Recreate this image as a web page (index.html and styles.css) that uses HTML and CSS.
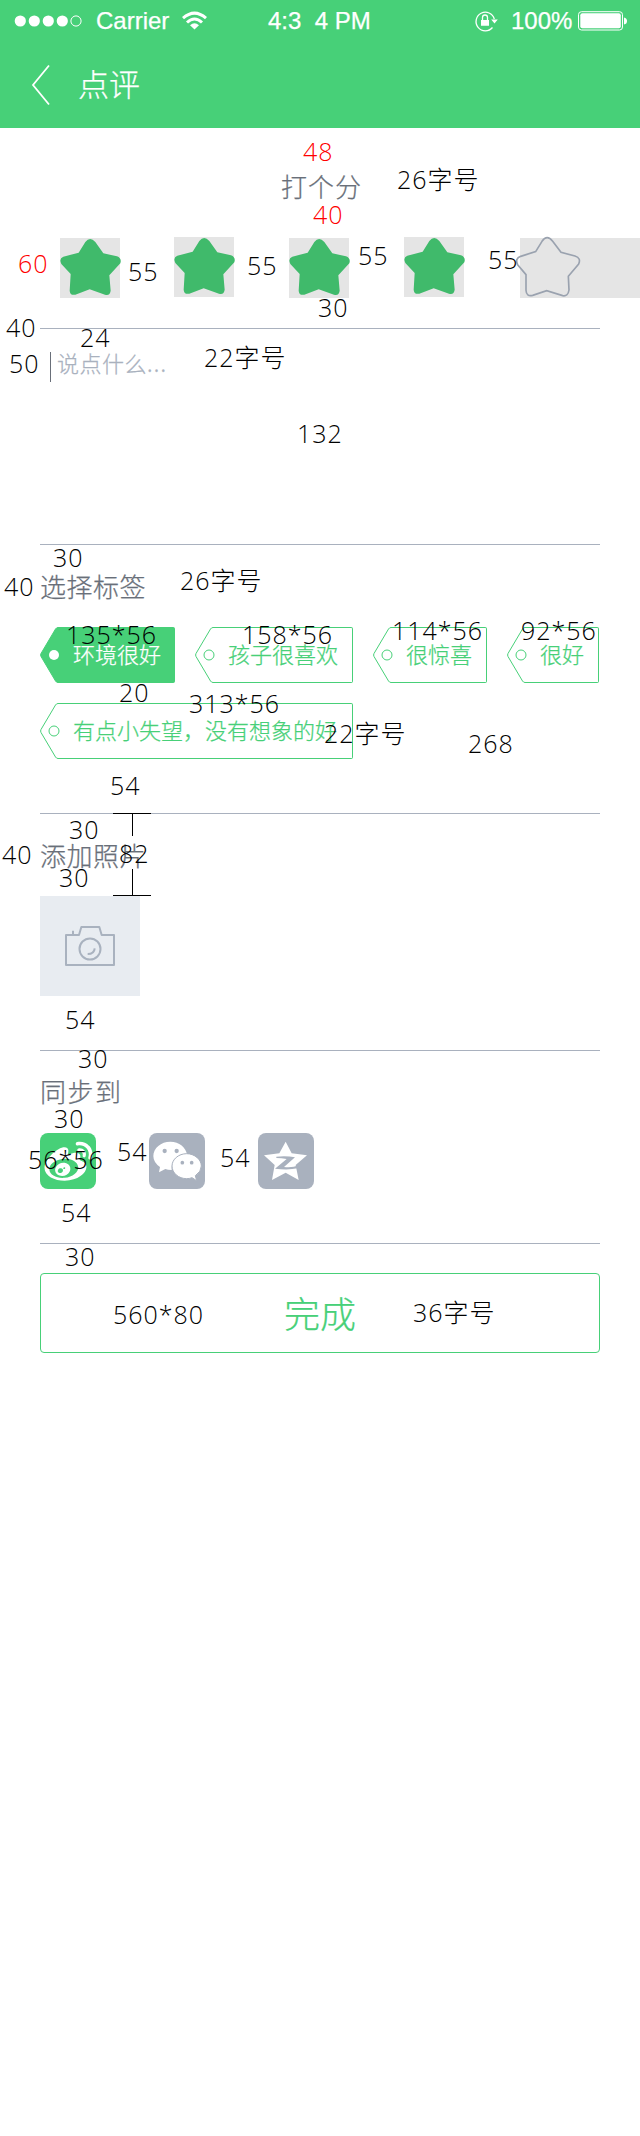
FILE: index.html
```html
<!DOCTYPE html>
<html lang="zh-CN">
<head>
<meta charset="utf-8">
<title>点评</title>
<link rel="stylesheet" href="styles.css">
</head>
<body>
<svg class="defs" width="0" height="0">
  <defs>
    <path id="star" d="M76 12Q90-6 106 12L130 46L171 55Q186 61 181 76L148 112L152 158Q150 174 135 170L89 154L46 170Q30 173 29 158L32 108L4 78Q-4 62 10 56L56 44Z"/>
    <path id="tag-head" d="M18 .5Q16.500 .5 15.500 2L1 26.500Q.2 28 1 29.500L15.500 54Q16.500 55.500 18 55.500"/>
  </defs>
</svg>
<header class="header">
  <div class="status">
    <svg class="signal" width="68" height="14" viewBox="0 0 68 14"><g fill="#fff"><circle cx="6.300" cy="7" r="5.600"/><circle cx="20.300" cy="7" r="5.600"/><circle cx="34.300" cy="7" r="5.600"/><circle cx="48.300" cy="7" r="5.600"/></g><circle cx="62" cy="7" r="5.100" fill="none" stroke="#fff"/></svg>
    <span class="carrier">Carrier</span>
    <svg class="wifi" width="25" height="19" viewBox="0 0 25 19"><g fill="none" stroke="#fff" stroke-width="3"><path d="M1 7.200Q12.500-3 24 7.200"/><path d="M5 11.500Q12.500 4.500 20 11.500"/></g><path fill="#fff" d="M8 14.200Q12.500 10.500 17 14.200L12.500 18.500Z"/></svg>
    <span class="time">4:3  4 PM</span>
    <svg class="lock" width="24" height="22" viewBox="0 0 24 22"><path fill="none" stroke="#fff" stroke-width="1.300" d="M17.500 17.500A9.300 9.300 0 1 1 19.300 9"/><path fill="#fff" d="M16.200 9.500H22.800L19.500 13.500ZM6 10H14V15.800H6Z"/><path fill="none" stroke="#fff" stroke-width="1.300" d="M7.500 10V7.500Q7.500 5 10 5Q12.500 5 12.500 7.500V10"/></svg>
    <span class="percent">100%</span>
    <svg class="battery" width="50" height="20" viewBox="0 0 50 20"><rect x=".5" y=".7" width="44" height="18.300" rx="3" fill="none" stroke="#fff"/><rect x="2.300" y="2.300" width="40.500" height="15" rx="2" fill="#fff"/><path fill="#fff" d="M46 6.500Q49 7 49 10Q49 13 46 13.500Z"/></svg>
  </div>
  <div class="nav">
    <svg width="20" height="42" viewBox="0 0 20 42"><path fill="none" stroke="#fff" stroke-width="1.800" d="M18 1.500L2 21L18 40.500"/></svg>
    <h1>点评</h1>
  </div>
</header>

<main class="page">
  <section class="score">
    <h2>打个分</h2>
    <div class="stars">
      <svg class="star" viewBox="0 0 180 180"><use href="#star"/></svg>
      <svg class="star raised" viewBox="0 0 180 180"><use href="#star"/></svg>
      <svg class="star" viewBox="0 0 180 180"><use href="#star"/></svg>
      <svg class="star raised" viewBox="0 0 180 180"><use href="#star"/></svg>
      <svg class="star empty" viewBox="0 0 360 180"><path d="M66 10Q81-12 98 10L123 43L165 54Q184 60 176 78L145 115L147 156Q144 176 128 173L80 158L38 172Q19 177 18 157L18 110L-7 80Q-16 62 2 55L47 41Z"/></svg>
    </div>
  </section>

  <section class="comment"><p>说点什么<span class="dots">...</span></p></section>

  <section class="block">
    <h2 class="tight">选择标签</h2>
    <div class="tags">
      <div class="tag w135 on"><svg viewBox="0 0 18 56"><use href="#tag-head"/><circle cx="14" cy="28" r="5"/></svg><span>环境很好</span></div>
      <div class="tag w158"><svg viewBox="0 0 18 56"><use href="#tag-head"/><circle cx="14" cy="28" r="5"/></svg><span>孩子很喜欢</span></div>
      <div class="tag w114"><svg viewBox="0 0 18 56"><use href="#tag-head"/><circle cx="14" cy="28" r="5"/></svg><span>很惊喜</span></div>
      <div class="tag w92"><svg viewBox="0 0 18 56"><use href="#tag-head"/><circle cx="14" cy="28" r="5"/></svg><span>很好</span></div>
      <div class="tag w313"><svg viewBox="0 0 18 56"><use href="#tag-head"/><circle cx="14" cy="28" r="5"/></svg><span>有点小失望，没有想象的好</span></div>
    </div>
  </section>

  <section class="block">
    <h2 class="tight">添加照片</h2>
    <div class="photo">
      <svg viewBox="0 0 300 300" fill="none" stroke="#a9b2bf" stroke-width="6"><path d="M78 117H117L124 93H178L185 117H222V207H78Z" stroke-linejoin="round"/><circle cx="150" cy="159" r="31.500"/><path d="M164 157Q163 174 143 174"/><path d="M99 104V115"/></svg>
    </div>
  </section>

  <section class="block sync">
    <h2>同步到</h2>
    <div class="shares">
      <div class="share weibo"><svg viewBox="0 0 56 56"><path fill="#fff" transform="translate(4.500 4.200) scale(2)" d="M10.098 20.323c-3.977.391-7.414-1.406-7.672-4.020-.259-2.609 2.759-5.047 6.740-5.441 3.979-.394 7.413 1.404 7.671 4.018.259 2.600-2.759 5.049-6.737 5.439l-.002.004zM9.050 17.219c-.384.616-1.208.884-1.829.602-.612-.279-.793-.991-.406-1.593.379-.595 1.176-.861 1.793-.601.622.263.820.972.442 1.592zm1.270-1.627c-.141.237-.449.353-.689.253-.236-.090-.313-.361-.177-.586.138-.227.436-.346.672-.240.239.090.315.360.180.601l.014-.028zm.176-2.719c-1.893-.493-4.033.450-4.857 2.118-.836 1.704-.026 3.591 1.886 4.210 1.983.640 4.318-.341 5.132-2.179.800-1.793-.201-3.642-2.161-4.149zm7.563-1.224c-.346-.105-.570-.180-.405-.615.375-.977.420-1.804 0-2.404-.781-1.112-2.915-1.053-5.364-.030 0 0-.766.331-.571-.271.376-1.217.315-2.224-.270-2.809-1.338-1.337-4.869.045-7.888 3.080C1.309 10.870 0 13.273 0 15.348c0 3.981 5.099 6.395 10.086 6.395 6.536 0 10.888-3.801 10.888-6.820 0-1.822-1.547-2.854-2.915-3.284v.010zm1.908-5.092c-.766-.856-1.908-1.187-2.960-.962-.436.090-.706.511-.616.932.090.420.511.691.932.602.511-.105 1.067.044 1.442.465.376.421.466.977.316 1.473-.136.406.089.856.510.992.405.119.857-.105.992-.512.330-1.021.120-2.178-.646-3.035l.030.045zm2.418-2.195c-1.576-1.757-3.905-2.419-6.054-1.968-.496.104-.812.587-.706 1.081.104.496.586.813 1.082.707 1.532-.331 3.185.150 4.296 1.383 1.112 1.246 1.429 2.943.947 4.416-.165.480.106 1.007.586 1.157.479.165.991-.104 1.157-.586.675-2.088.241-4.478-1.338-6.235l.030.045z"/></svg></div>
      <div class="share"><svg viewBox="0 0 168 168"><path fill="#fff" d="M64 26C36 26 13 45 13 69Q13 88 33 102L30 118L49 108Q56 111 68 111Q66 66 114 65C111 43 91 26 64 26Z"/><path fill="#fff" stroke="#a9b1be" stroke-width="3" d="M113 62C89 62 69 79 69 99C69 120 89 137 113 137Q122 137 129 134L143 143L139 128Q157 116 157 99C157 79 136 62 113 62Z"/><g fill="#a9b1be"><circle cx="47" cy="54" r="6.500"/><circle cx="83" cy="54" r="6.500"/><circle cx="100" cy="89" r="5.500"/><circle cx="128" cy="89" r="5.500"/></g></svg></div>
      <div class="share"><svg viewBox="0 0 168 168"><path fill="#fff" d="M83 26L101 61L147 67L113 96L122 141L83 119L42 141L50 96L18 67L64 61Z"/><path fill="#a9b1be" d="M55 71Q84 67 111 73L78 102Q103 105 122 97L119 106Q90 112 51 107L86 78Q70 75 55 75Z"/></svg></div>
    </div>
  </section>
  <button class="submit">完成</button>
</main>

<div class="notes">
  <span class="red n1">48</span><span class="n2">26字号</span><span class="red n3">40</span><span class="red n4">60</span>
  <span class="n5">55</span><span class="n6">55</span><span class="n7">55</span><span class="n8">55</span><span class="n9">30</span>
  <span class="n10">40</span><span class="n11">24</span><span class="n12">50</span><span class="n13">22字号</span><span class="n14">132</span>
  <span class="n15">30</span><span class="n16">40</span><span class="n17">26字号</span><span class="n18">135*56</span><span class="n19">158*56</span>
  <span class="n20">114*56</span><span class="n21">92*56</span><span class="n22">20</span><span class="n23">313*56</span><span class="n24">22字号</span>
  <span class="n25">268</span><span class="n26">54</span><span class="n27">30</span><span class="n28">40</span><span class="n29">82</span>
  <span class="n30">30</span><span class="n31">54</span><span class="n32">30</span><span class="n33">30</span><span class="n34">56*56</span>
  <span class="n35">54</span><span class="n36">54</span><span class="n37">54</span><span class="n38">30</span><span class="n39">560*80</span><span class="n40">36字号</span>
  <svg class="ruler" width="38" height="83" viewBox="0 0 38 83"><path stroke="#000" d="M0 .5H38M0 82.500H38M19.500 0V23M19.500 56V83"/></svg>
</div>
</body>
</html>
```
FILE: styles.css
```css
* { box-sizing: border-box; }
body {
  margin: 0;
  position: relative;
  width: 640px;
  min-height: 2136px;
  overflow-x: hidden;
  background: #fff;
  color: #696f79;
  font-family: "Noto Sans CJK SC", sans-serif;
  font-weight: 300;
  -webkit-text-stroke-width: .25px;
}
svg { display: block; flex: none; overflow: visible; }
.defs { position: absolute; }
h1, h2, p { margin: 0; font-weight: 300; }

.header { height: 128px; background: #47d078; color: #fff; }
.status {
  display: flex;
  align-items: center;
  height: 41px;
  padding-left: 14px;
  font: 400 24px/41px "Liberation Sans", Arial, sans-serif;
  white-space: pre;
}
.carrier { width: 73px; margin-left: 14px; }
.wifi { margin-left: 13px; }
.time { width: 104px; margin-left: 61px; }
.lock { margin-left: 103px; }
.percent { width: 62px; margin-left: 12px; }
.battery { margin-left: 5px; }
.nav { display: flex; align-items: center; height: 87px; padding-left: 31px; }
.nav h1 { margin-left: 27px; padding-bottom: 4px; font-size: 31px; line-height: 40px; }

.page { padding: 0 40px; }
h2 { height: 26px; font-size: 26px; line-height: 24px; letter-spacing: 1px; white-space: nowrap; }
h2.tight { letter-spacing: .5px; }

.score { height: 201px; padding-top: 46px; border-bottom: 1px solid #a9b1be; }
.score h2 { padding-left: 241px; }
.stars { display: flex; margin: 38px -40px 0 20px; }
.star { width: 60px; height: 60px; margin-right: 55px; background: #e5e5e5; fill: #40ba6b; }
.star.raised { margin-top: -1px; }
.star:first-child { margin-right: 54px; }
.star:nth-child(4) { margin-right: 56px; }
.star.empty { width: 120px; margin-right: 0; fill: none; stroke: #9aa2af; stroke-width: 5; }

.comment { height: 216px; padding: 23px 10px 0; border-bottom: 1px solid #a9b1be; }
.comment p {
  height: 30px;
  padding-left: 6px;
  border-left: 1px solid #696f79;
  color: #a9b1be;
  font-size: 22px;
  line-height: 20px;
  letter-spacing: .5px;
}
.dots { letter-spacing: 1.3px; }

.block { padding: 29px 0 54px; border-bottom: 1px solid #a9b1be; }
.tags { display: flex; flex-wrap: wrap; gap: 20px; margin-top: 27px; }
.tag { display: flex; height: 56px; color: #47d078; }
.tag svg { position: relative; z-index: 1; width: 18px; height: 56px; fill: none; stroke: #47d078; }
.tag span {
  flex: 1;
  padding-left: 15px;
  border: 1px solid #47d078;
  border-left: 0;
  border-radius: 0 2px 2px 0;
  font-size: 22px;
  line-height: 51px;
  white-space: nowrap;
}
.tag.on { color: #fff; }
.tag.on span { background: #47d078; }
.tag.on use { fill: #47d078; }
.tag.on circle { fill: #fff; stroke: #fff; stroke-width: 0; }
.w135 { width: 135px; }
.w158 { width: 158px; }
.w114 { width: 114px; }
.w92 { width: 92px; }
.w313 { width: 313px; }

.photo { width: 100px; height: 100px; margin-top: 27px; background: #e8ecf1; }

.sync { padding-top: 28px; }
.sync h2 { letter-spacing: 1.5px; }
.shares { display: flex; gap: 53px; margin-top: 28px; }
.share { width: 56px; height: 56px; border-radius: 8px; background: #a9b1be; }
.weibo { background: #47d078; }

.submit {
  display: block;
  width: 560px;
  height: 80px;
  margin-top: 29px;
  padding: 0 0 2px;
  border: 1px solid #47d078;
  border-radius: 4px;
  background: #fff;
  color: #47d078;
  font: 300 36px/74px "Noto Sans CJK SC", sans-serif;
  -webkit-text-stroke-width: .25px;
}

/* Measurement notes laid over the screen */
.notes {
  position: absolute;
  z-index: 2;
  inset: 0;
  color: #000;
  font: 300 25px/26px "Open Sans", "Noto Sans CJK SC", sans-serif;
  letter-spacing: 1px;
  white-space: nowrap;
  -webkit-text-stroke-width: 0;
}
.notes span { position: absolute; margin-left: 1px; }
.notes .red { color: #f00; }
.ruler { position: absolute; left: 113px; top: 813px; }
.n1 { left: 302px; top: 138px; }
.n2 { left: 396px; top: 166px; }
.n3 { left: 312px; top: 201px; }
.n4 { left: 17px; top: 250px; }
.n5 { left: 127px; top: 258px; }
.n6 { left: 246px; top: 252px; }
.n7 { left: 357px; top: 242px; }
.n8 { left: 487px; top: 246px; }
.n9 { left: 317px; top: 294px; }
.n10 { left: 5px; top: 314px; }
.n11 { left: 79px; top: 324px; }
.n12 { left: 8px; top: 350px; }
.n13 { left: 203px; top: 344px; }
.n14 { left: 296px; top: 420px; }
.n15 { left: 52px; top: 544px; }
.n16 { left: 3px; top: 573px; }
.n17 { left: 179px; top: 567px; }
.n18 { left: 65px; top: 621px; }
.n19 { left: 241px; top: 621px; }
.n20 { left: 391px; top: 617px; }
.n21 { left: 520px; top: 617px; }
.n22 { left: 118px; top: 679px; }
.n23 { left: 188px; top: 690px; }
.n24 { left: 323px; top: 720px; }
.n25 { left: 467px; top: 730px; }
.n26 { left: 109px; top: 772px; }
.n27 { left: 68px; top: 816px; }
.n28 { left: 1px; top: 841px; }
.n29 { left: 118px; top: 840px; }
.n30 { left: 58px; top: 864px; }
.n31 { left: 64px; top: 1006px; }
.n32 { left: 77px; top: 1045px; }
.n33 { left: 53px; top: 1105px; }
.n34 { left: 27px; top: 1146px; }
.n35 { left: 116px; top: 1138px; }
.n36 { left: 219px; top: 1144px; }
.n37 { left: 60px; top: 1199px; }
.n38 { left: 64px; top: 1243px; }
.n39 { left: 112px; top: 1301px; }
.n40 { left: 412px; top: 1299px; }
```
